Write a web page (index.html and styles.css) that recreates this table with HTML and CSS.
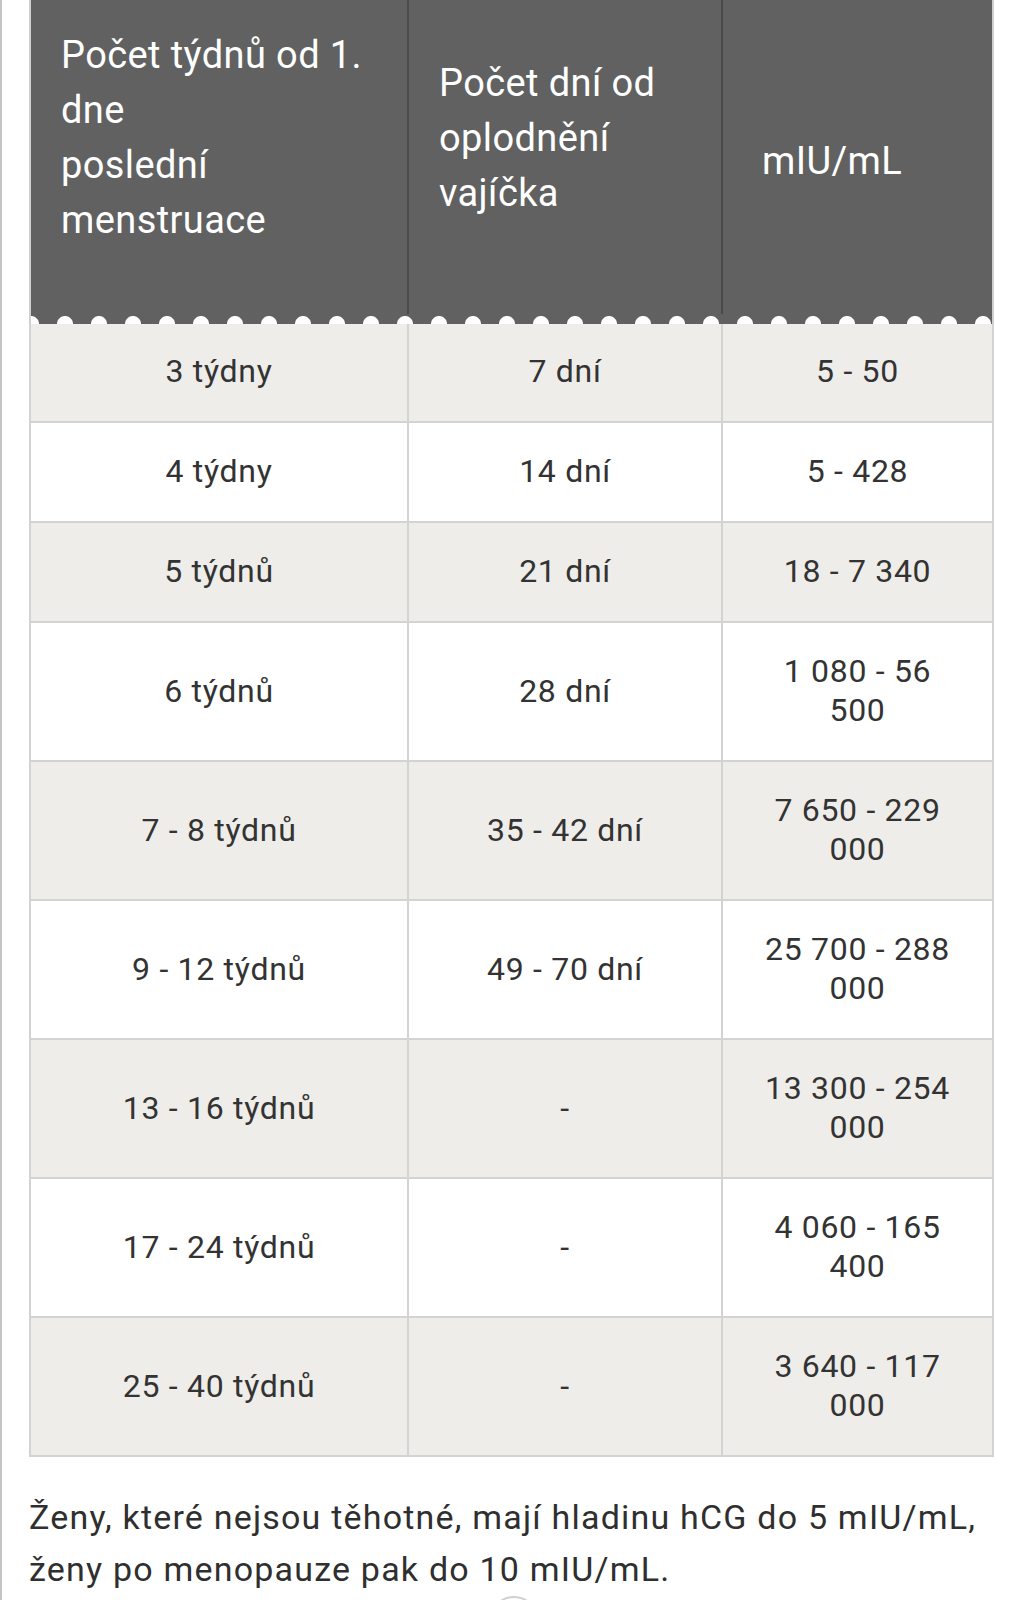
FILE: index.html
```html
<!DOCTYPE html>
<html lang="cs">
<head>
<meta charset="utf-8">
<title>hCG tabulka</title>
<link rel="stylesheet" href="styles.css">
</head>
<body>
<div class="page">
  <table class="hcg">
    <colgroup>
      <col class="c1">
      <col class="c2">
      <col class="c3">
    </colgroup>
    <thead>
      <tr class="head">
        <th class="h1">Počet týdnů od 1. dne<br>poslední menstruace</th>
        <th class="h2">Počet dní od oplodnění vajíčka</th>
        <th class="h3">mIU/mL</th>
      </tr>
      <tr class="scallop"><td colspan="3"></td></tr>
    </thead>
    <tbody>
      <tr class="odd"><td>3 týdny</td><td>7 dní</td><td>5 - 50</td></tr>
      <tr><td>4 týdny</td><td>14 dní</td><td>5 - 428</td></tr>
      <tr class="odd"><td>5 týdnů</td><td>21 dní</td><td>18 - 7 340</td></tr>
      <tr><td>6 týdnů</td><td>28 dní</td><td>1 080 - 56 500</td></tr>
      <tr class="odd"><td>7 - 8 týdnů</td><td>35 - 42 dní</td><td>7 650 - 229 000</td></tr>
      <tr><td>9 - 12 týdnů</td><td>49 - 70 dní</td><td>25 700 - 288 000</td></tr>
      <tr class="odd"><td>13 - 16 týdnů</td><td>-</td><td>13 300 - 254 000</td></tr>
      <tr><td>17 - 24 týdnů</td><td>-</td><td>4 060 - 165 400</td></tr>
      <tr class="odd"><td>25 - 40 týdnů</td><td>-</td><td>3 640 - 117 000</td></tr>
    </tbody>
  </table>
  <p class="note">Ženy, které nejsou těhotné, mají hladinu hCG do 5 mIU/mL, ženy po menopauze pak do 10 mIU/mL.</p>
  <div class="totop-wrap"><span class="totop"></span></div>
</div>
</body>
</html>
```
FILE: styles.css
```css
html, body {
  margin: 0;
  padding: 0;
  background: #ffffff;
}

body {
  font-family: Roboto, "Noto Sans", "Liberation Sans", sans-serif;
  color: #333333;
}

.page {
  border-left: 2px solid #c4c4c4;
  min-height: 1600px;
  box-sizing: border-box;
  padding-left: 27px;
  overflow: hidden;
}

.hcg {
  border-collapse: collapse;
  table-layout: fixed;
  width: 963px;
  border-left: 2px solid #cfcfcd;
  border-right: 2px solid #cfcfcd;
  border-bottom: 2px solid #cfcfcd;
}

.c1 { width: 378px; }
.c2 { width: 314px; }
.c3 { width: 271px; }

.head th {
  background: #616161;
  color: #ffffff;
  font-weight: 400;
  font-size: 38px;
  line-height: 55px;
  letter-spacing: 0.4px;
  text-align: left;
  height: 314px;
  box-sizing: border-box;
  vertical-align: middle;
  padding: 0 20px 38px 30px;
  border-left: 2px solid #4a4a4a;
}

.head th.h1 {
  border-left: 2px solid #cfcfcd;
}

.head th.h3 {
  padding-left: 39px;
  padding-top: 8px;
  padding-bottom: 0;
}

.scallop td {
  height: 10px;
  padding: 0;
  background-color: #616161;
  background-image: radial-gradient(circle at 50% 100%, #ffffff 7.5px, rgba(255,255,255,0) 8.5px);
  background-size: 34px 10px;
  background-position: -17px 0;
  background-repeat: repeat-x;
}

tbody td {
  font-size: 32px;
  line-height: 39px;
  letter-spacing: 0.7px;
  text-align: center;
  vertical-align: middle;
  padding: 29.5px 35px;
  border: 2px solid #d3d3d1;
  background: #ffffff;
  color: #333333;
}

tbody tr:first-child td {
  border-top: 0;
  padding-top: 28px;
}

tbody tr.odd td {
  background: #eeede9;
}

.note {
  margin: 34px 0 0 0;
  font-size: 34px;
  line-height: 52px;
  letter-spacing: 1.2px;
  color: #2f2f2f;
  width: 962px;
}

.totop-wrap {
  display: flex;
  justify-content: center;
  padding-right: 22px;
  margin-top: 1px;
}

.totop {
  width: 44px;
  height: 44px;
  border-radius: 50%;
  border: 2px solid #cfcfcf;
  background: #ffffff;
}
```
